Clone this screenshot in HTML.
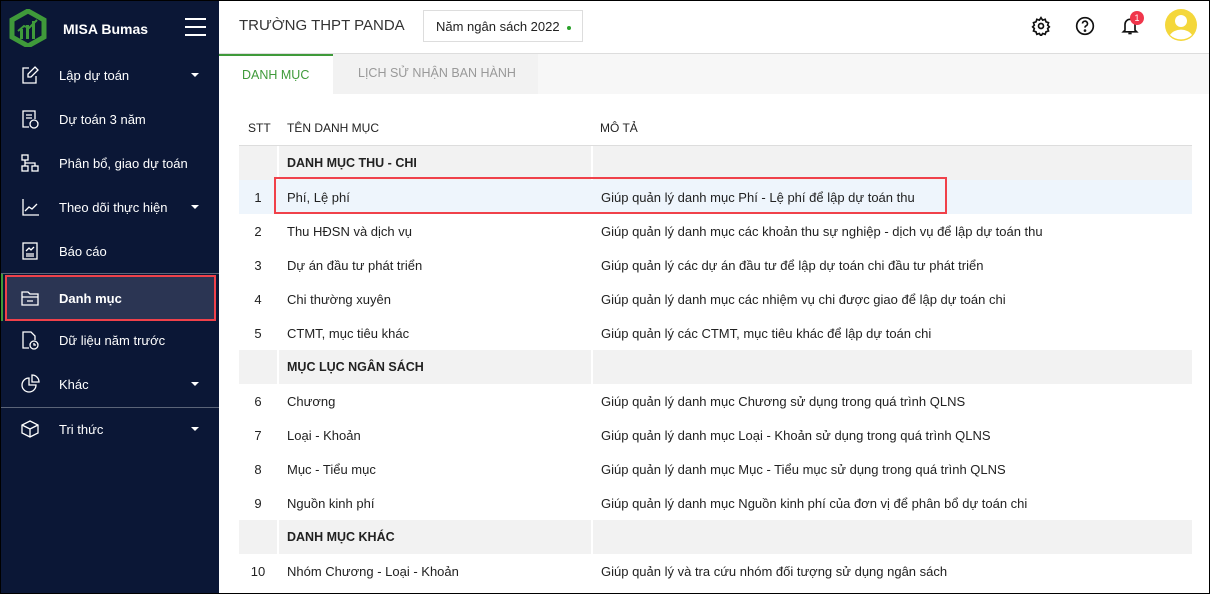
<!DOCTYPE html>
<html><head><meta charset="utf-8"><style>
*{box-sizing:border-box;margin:0;padding:0}
body{width:1210px;height:594px;overflow:hidden;font-family:"Liberation Sans",sans-serif;background:#fff;position:relative}
#frame{position:absolute;inset:0;border:1px solid #000;z-index:50;pointer-events:none}
#side{position:absolute;left:0;top:0;width:219px;height:594px;background:#0b1736;color:#fff}
.it{position:absolute;left:0;width:219px;height:44px;display:flex;align-items:center;font-size:13px}
.it svg{position:absolute;left:20px}
.it span{position:absolute;left:59px}
.caret{position:absolute;left:191px;width:0;height:0;border-left:4px solid transparent;border-right:4px solid transparent;border-top:4px solid #fff}
.sep{position:absolute;left:0;width:219px;height:1px;background:#5b6478}
#main{position:absolute;left:219px;top:0;right:0;height:594px}
.t{position:absolute;font-size:13px;color:#222;white-space:nowrap}
.row{position:absolute;left:20px;width:953px;height:34px}
.grp{background:#f2f2f2}
.grp:before{content:"";position:absolute;left:38px;top:0;width:2px;height:34px;background:#fff}
.grp:after{content:"";position:absolute;left:352px;top:0;width:2px;height:34px;background:#fff}
.row .a,.row .b,.row .c{position:absolute;top:10px;font-size:13px;color:#222;white-space:nowrap}
.row .a{left:0;width:38px;text-align:center}
.row .b{left:48px}
.row .c{left:362px}
.grp .b{font-weight:bold;font-size:12.5px}
</style></head><body>
<div id="frame"></div>
<div id="side">
 <svg style="position:absolute;left:9px;top:9px" width="38" height="38" viewBox="0 0 38 38"><path d="M19 2 L35 11 L35 28 L19 37 L3 28 L3 11 Z" fill="none" stroke="#3f9a3a" stroke-width="5"/><rect x="11" y="20" width="3" height="10" fill="#3f9a3a"/><rect x="17" y="16" width="3" height="14" fill="#3f9a3a"/><rect x="23" y="12" width="3" height="18" fill="#3f9a3a"/><path d="M9 22 L15 17 L20 19 L28 11" stroke="#3f9a3a" stroke-width="2" fill="none"/></svg>
 <div style="position:absolute;left:63px;top:21px;font-size:14px;font-weight:bold">MISA Bumas</div>
 <div style="position:absolute;left:185px;top:18px;width:21px;height:2px;background:#fff;box-shadow:0 8px 0 #fff,0 16px 0 #fff"></div>
 <div class="it" style="top:53px"><svg width="20" height="20" viewBox="0 0 20 20" fill="none" stroke="#fff" stroke-width="1.3"><path d="M9 3H3v15h13v-7"/><path d="M15 2l3 3-7 7H8V9z"/></svg><span>Lập dự toán</span><i class="caret"></i></div>
 <div class="it" style="top:97px"><svg width="20" height="20" viewBox="0 0 20 20" fill="none" stroke="#fff" stroke-width="1.3"><path d="M9 18H3V2h12v8"/><path d="M6 6h6M6 9h6"/><circle cx="14" cy="15" r="4"/></svg><span>Dự toán 3 năm</span></div>
 <div class="it" style="top:141px"><svg width="20" height="20" viewBox="0 0 20 20" fill="none" stroke="#fff" stroke-width="1.3"><rect x="2" y="2" width="6" height="5"/><rect x="2" y="13" width="6" height="5"/><rect x="12" y="13" width="6" height="5"/><path d="M5 7v6M5 10h10v3"/></svg><span>Phân bổ, giao dự toán</span></div>
 <div class="it" style="top:185px"><svg width="20" height="20" viewBox="0 0 20 20" fill="none" stroke="#fff" stroke-width="1.3"><path d="M3 2v16h16"/><path d="M5 14l4-4 3 2 5-5"/></svg><span>Theo dõi thực hiện</span><i class="caret"></i></div>
 <div class="it" style="top:229px"><svg width="20" height="20" viewBox="0 0 20 20" fill="none" stroke="#fff" stroke-width="1.3"><rect x="3" y="2" width="14" height="16"/><path d="M6 10l3-3 2 2 3-3M6 13h8M6 15h8"/></svg><span>Báo cáo</span></div>
 <div class="sep" style="top:273px"></div>
 <div style="position:absolute;left:0;top:274px;width:3px;height:47px;background:#3f9a3a"></div>
 <div class="it" style="top:275px;left:5px;width:211px;height:46px;background:#2b3553;border:2px solid #f0414a"><svg style="left:13px" width="20" height="20" viewBox="0 0 20 20" fill="none" stroke="#fff" stroke-width="1.3"><path d="M2 4h6l2 2h8v11H2z"/><path d="M2 9h16M7 13h6"/></svg><span style="left:52px;font-weight:bold">Danh mục</span></div>
 <div class="it" style="top:318px"><svg width="20" height="20" viewBox="0 0 20 20" fill="none" stroke="#fff" stroke-width="1.3"><path d="M9 18H3V2h8l4 4v4"/><circle cx="14" cy="15" r="4"/><path d="M14 13v2h2"/></svg><span>Dữ liệu năm trước</span></div>
 <div class="it" style="top:362px"><svg width="20" height="20" viewBox="0 0 20 20" fill="none" stroke="#fff" stroke-width="1.3"><path d="M9 4a7 7 0 1 0 7 7H9z"/><path d="M12 1a7 7 0 0 1 7 7h-7z"/></svg><span>Khác</span><i class="caret"></i></div>
 <div class="sep" style="top:407px"></div>
 <div class="it" style="top:407px"><svg width="20" height="20" viewBox="0 0 20 20" fill="none" stroke="#fff" stroke-width="1.3"><path d="M10 2l8 4v8l-8 4-8-4V6z"/><path d="M2 6l8 4 8-4M10 10v8"/></svg><span>Tri thức</span><i class="caret"></i></div>
</div>
<div id="main">
 <div class="t" style="left:20px;top:17px;font-size:15px;color:#333">TRƯỜNG THPT PANDA</div>
 <div style="position:absolute;left:204px;top:10px;width:160px;height:32px;border:1px solid #ddd;font-size:13px;color:#222;padding:8px 0 0 12px">Năm ngân sách 2022 <span style="display:inline-block;width:4px;height:4px;border-radius:50%;background:#2aa12a;vertical-align:middle;margin-left:4px"></span></div>
 <svg style="position:absolute;left:812px;top:16px" width="20" height="20" viewBox="0 0 24 24" fill="none" stroke="#111" stroke-width="2"><circle cx="12" cy="12" r="3"/><path d="M12 2l2 3 3-1 1 3 3 1-1 3 2 2-2 2 1 3-3 1-1 3-3-1-2 3-2-3-3 1-1-3-3-1 1-3-2-2 2-2-1-3 3-1 1-3 3 1z"/></svg>
 <svg style="position:absolute;left:856px;top:16px" width="20" height="20" viewBox="0 0 24 24" fill="none" stroke="#111" stroke-width="2"><circle cx="12" cy="12" r="10"/><path d="M9 9a3 3 0 1 1 4 3c-1 .5-1 1-1 2"/><circle cx="12" cy="17.5" r=".6" fill="#111"/></svg>
 <svg style="position:absolute;left:901px;top:16px" width="20" height="20" viewBox="0 0 24 24" fill="none" stroke="#111" stroke-width="2"><path d="M6 17V10a6 6 0 0 1 12 0v7l2 2H4z"/><path d="M10 21h4"/></svg>
 <div style="position:absolute;left:911px;top:11px;width:14px;height:14px;border-radius:50%;background:#f0364b;color:#fff;font-size:9px;text-align:center;line-height:14px">1</div>
 <svg style="position:absolute;left:946px;top:9px" width="32" height="32" viewBox="0 0 32 32"><circle cx="16" cy="16" r="16" fill="#f4d73b"/><circle cx="16" cy="12" r="6" fill="#fff"/><path d="M5 26a12 9 0 0 1 22 0a16 16 0 0 1-22 0z" fill="#fff"/></svg>
 <div style="position:absolute;left:0;top:53px;width:991px;height:1px;background:#ddd"></div>
 <div style="position:absolute;left:0;top:54px;width:114px;height:40px;border-top:2px solid #3f9a3a"></div>
 <div class="t" style="left:23px;top:68px;color:#3f9a3a;font-size:12.5px">DANH MỤC</div>
 <div style="position:absolute;left:114px;top:54px;width:205px;height:40px;background:#f2f2f2"></div>
 <div class="t" style="left:139px;top:66px;color:#999;font-size:12.5px">LỊCH SỬ NHẬN BAN HÀNH</div>
 <div style="position:absolute;left:319px;top:54px;width:672px;height:40px;background:#f7f7f7"></div>
 <div class="t" style="left:29px;top:121px;font-size:12px">STT</div>
 <div class="t" style="left:68px;top:121px;font-size:12px">TÊN DANH MỤC</div>
 <div class="t" style="left:381px;top:121px;font-size:12px">MÔ TẢ</div>
 <div style="position:absolute;left:20px;top:145px;width:953px;height:1px;background:#ddd"></div>
 <div class="row grp" style="top:146px"><div class="b">DANH MỤC THU - CHI</div></div>
 <div class="row" style="top:180px;background:#eef5fc"><div class="a">1</div><div class="b">Phí, Lệ phí</div><div class="c">Giúp quản lý danh mục Phí - Lệ phí để lập dự toán thu</div></div>
 <div style="position:absolute;left:55px;top:177px;width:673px;height:37px;border:2px solid #f0414a"></div>
 <div class="row" style="top:214px"><div class="a">2</div><div class="b">Thu HĐSN và dịch vụ</div><div class="c">Giúp quản lý danh mục các khoản thu sự nghiệp - dịch vụ để lập dự toán thu</div></div>
 <div class="row" style="top:248px"><div class="a">3</div><div class="b">Dự án đầu tư phát triển</div><div class="c">Giúp quản lý các dự án đầu tư để lập dự toán chi đầu tư phát triển</div></div>
 <div class="row" style="top:282px"><div class="a">4</div><div class="b">Chi thường xuyên</div><div class="c">Giúp quản lý danh mục các nhiệm vụ chi được giao để lập dự toán chi</div></div>
 <div class="row" style="top:316px"><div class="a">5</div><div class="b">CTMT, mục tiêu khác</div><div class="c">Giúp quản lý các CTMT, mục tiêu khác để lập dự toán chi</div></div>
 <div class="row grp" style="top:350px"><div class="b">MỤC LỤC NGÂN SÁCH</div></div>
 <div class="row" style="top:384px"><div class="a">6</div><div class="b">Chương</div><div class="c">Giúp quản lý danh mục Chương sử dụng trong quá trình QLNS</div></div>
 <div class="row" style="top:418px"><div class="a">7</div><div class="b">Loại - Khoản</div><div class="c">Giúp quản lý danh mục Loại - Khoản sử dụng trong quá trình QLNS</div></div>
 <div class="row" style="top:452px"><div class="a">8</div><div class="b">Mục - Tiểu mục</div><div class="c">Giúp quản lý danh mục Mục - Tiểu mục sử dụng trong quá trình QLNS</div></div>
 <div class="row" style="top:486px"><div class="a">9</div><div class="b">Nguồn kinh phí</div><div class="c">Giúp quản lý danh mục Nguồn kinh phí của đơn vị để phân bổ dự toán chi</div></div>
 <div class="row grp" style="top:520px"><div class="b">DANH MỤC KHÁC</div></div>
 <div class="row" style="top:554px"><div class="a">10</div><div class="b">Nhóm Chương - Loại - Khoản</div><div class="c">Giúp quản lý và tra cứu nhóm đối tượng sử dụng ngân sách</div></div>
</div>
</body></html>
